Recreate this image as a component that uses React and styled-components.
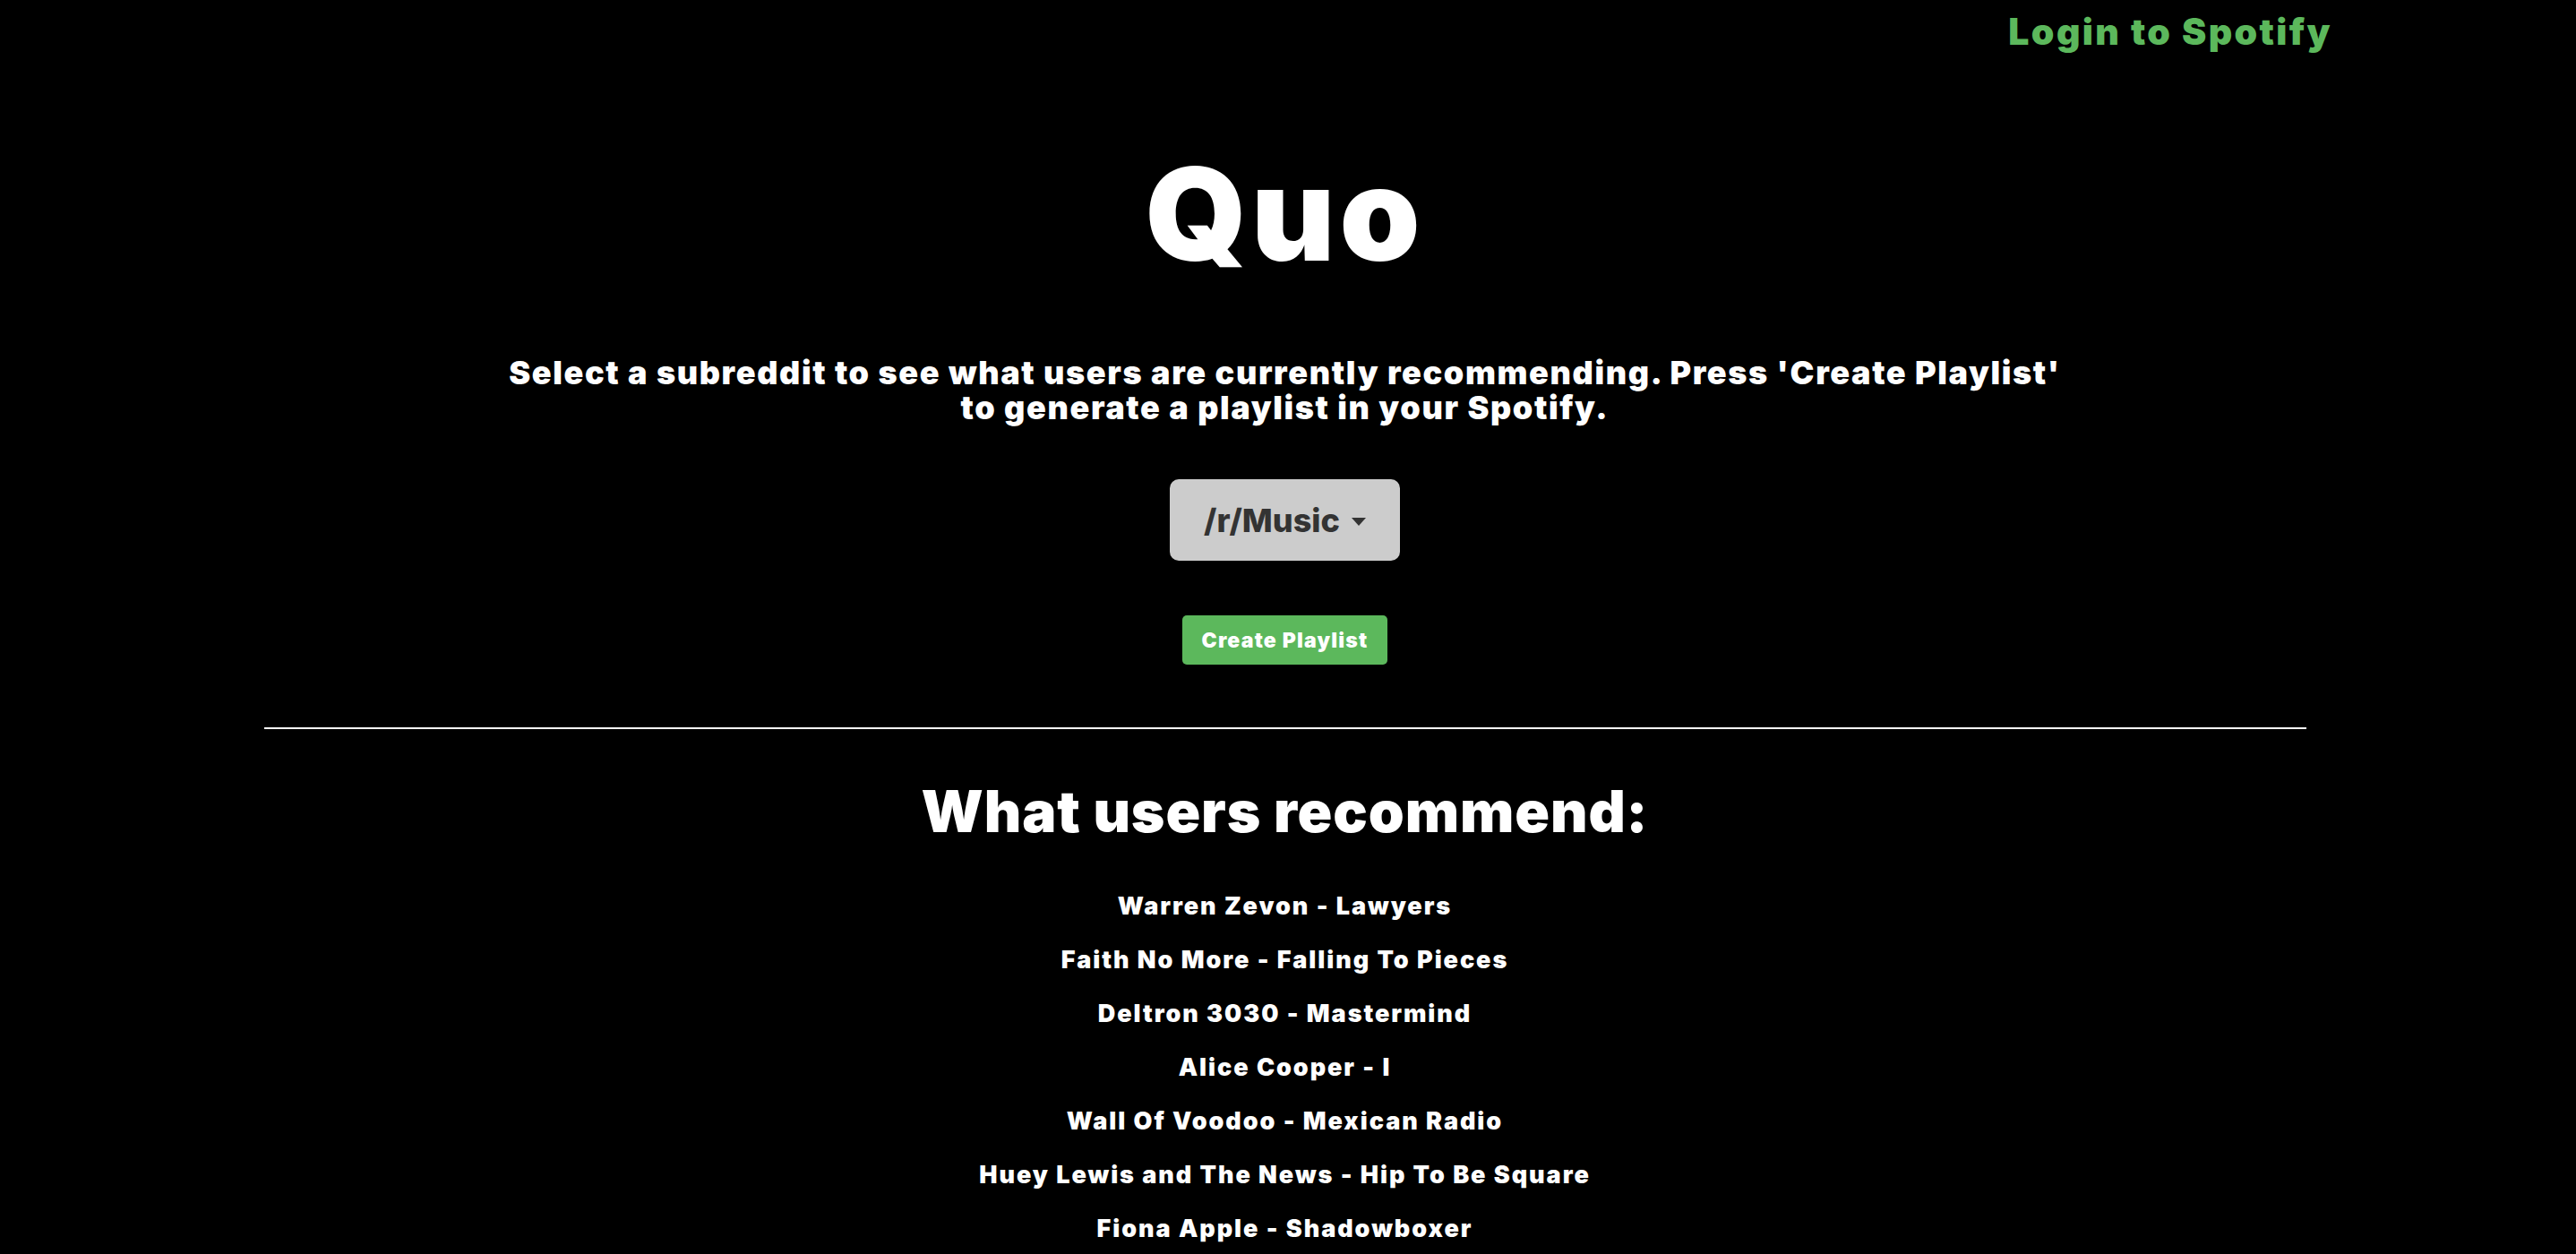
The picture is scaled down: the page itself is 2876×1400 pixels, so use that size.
import React from "react";
import styled, { createGlobalStyle } from "styled-components";

const Global = createGlobalStyle`
  html, body { margin: 0; padding: 0; background: #000; }
  body { font-family: Inter, "Liberation Sans", sans-serif; color: #fff; }
`;

const Page = styled.div`
  min-height: 1400px;
  padding-right: 7px;
  background: #000;
  display: flex;
  flex-direction: column;
`;

const Header = styled.header`
  display: flex;
  justify-content: flex-end;
  padding: 11px 265px 0 0;
`;

const LoginLink = styled.a`
  font-size: 41px;
  line-height: 48px;
  font-weight: 900;
  letter-spacing: 2.4px;
  color: #5cb85c;
  text-decoration: none;
  cursor: pointer;
`;

const Main = styled.main`
  display: flex;
  flex-direction: column;
  align-items: center;
`;

const Title = styled.h1`
  margin: 108px 0 0;
  font-size: 144px;
  line-height: 144px;
  font-weight: 900;
  letter-spacing: 5px;
`;

const Description = styled.p`
  margin: 86px 0 0;
  font-size: 36px;
  line-height: 39px;
  font-weight: 900;
  letter-spacing: 1.62px;
  text-align: center;
`;

const Dropdown = styled.button`
  margin-top: 60px;
  width: 257px;
  height: 91px;
  display: flex;
  align-items: center;
  justify-content: center;
  gap: 13px;
  background: #cccccc;
  color: #333;
  border: none;
  border-radius: 10px;
  font-family: inherit;
  font-size: 36px;
  font-weight: 800;
  cursor: pointer;
`;

const Caret = styled.span`
  width: 0;
  height: 0;
  border-left: 8px solid transparent;
  border-right: 8px solid transparent;
  border-top: 9px solid #333;
  margin-top: 4px;
`;

const CreateButton = styled.button`
  margin-top: 61px;
  width: 229px;
  height: 55px;
  padding: 0;
  background: #5cb85c;
  color: #fff;
  border: none;
  border-radius: 5px;
  font-family: inherit;
  font-size: 23px;
  font-weight: 900;
  letter-spacing: 1.2px;
  cursor: pointer;
`;

const Divider = styled.hr`
  margin: 70px auto 0;
  width: 2280px;
  height: 2px;
  border: none;
  background: #fff;
`;

const Heading = styled.h2`
  margin: 55px 0 0;
  font-size: 64px;
  line-height: 74px;
  font-weight: 900;
  letter-spacing: 0.9px;
  text-align: center;
`;

const List = styled.ul`
  list-style: none;
  margin: 39px 0 0;
  padding: 0;
  display: flex;
  flex-direction: column;
  align-items: center;
`;

const Song = styled.li`
  font-size: 27px;
  line-height: 60px;
  font-weight: 900;
  letter-spacing: 1.95px;
`;

const songs = [
  "Warren Zevon - Lawyers",
  "Faith No More - Falling To Pieces",
  "Deltron 3030 - Mastermind",
  "Alice Cooper - I",
  "Wall Of Voodoo - Mexican Radio",
  "Huey Lewis and The News - Hip To Be Square",
  "Fiona Apple - Shadowboxer",
];

export default function App() {
  return (
    <Page>
      <Global />
      <Header>
        <LoginLink>Login to Spotify</LoginLink>
      </Header>
      <Main>
        <Title>Quo</Title>
        <Description>
          Select a subreddit to see what users are currently recommending. Press 'Create Playlist'
          <br />
          to generate a playlist in your Spotify.
        </Description>
        <Dropdown>
          /r/Music
          <Caret />
        </Dropdown>
        <CreateButton>Create Playlist</CreateButton>
      </Main>
      <Divider />
      <Main>
        <Heading>What users recommend:</Heading>
        <List>
          {songs.map((s) => (
            <Song key={s}>{s}</Song>
          ))}
        </List>
      </Main>
    </Page>
  );
}
